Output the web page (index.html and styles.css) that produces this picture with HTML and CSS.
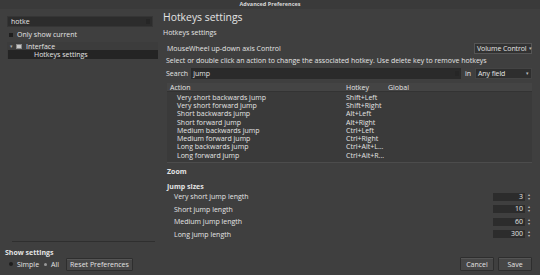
FILE: index.html
```html
<!DOCTYPE html>
<html lang="en">
<head>
    <meta charset="UTF-8">
    <title>Advanced Preferences</title>
    <link rel="stylesheet" href="styles.css">
</head>
<body>
    <div class="window">
        <div class="titlebar">Advanced Preferences</div>
        <div class="main">
            <div class="sidebar">
                <div class="search-box">hotke<span class="clear"></span></div>
                <label class="check-row"><span class="check"></span>Only show current</label>
                <div class="tree">
                    <div class="tree-item"><span class="arrow">▾</span><span class="folder"></span>Interface</div>
                    <div class="tree-item child selected">Hotkeys settings</div>
                </div>
                <div class="sidebar-fill"></div>
                <div class="sidebar-sep"></div>
                <div class="show-title">Show settings</div>
                <div class="show-row">
                    <span class="radio on"></span>Simple
                    <span class="radio"></span>All
                    <button class="btn reset">Reset Preferences</button>
                </div>
            </div>

            <div class="content">
                <h1 class="page-title">Hotkeys settings</h1>
                <div class="section-label">Hotkeys settings</div>

                <div class="option-row">
                    <span>MouseWheel up-down axis Control</span>
                    <span class="combo">Volume Control<span class="combo-arrow">▾</span></span>
                </div>
                <div class="hint">Select or double click an action to change the associated hotkey. Use delete key to remove hotkeys</div>

                <div class="search-row">
                    <span>Search</span>
                    <span class="search-input">jump<span class="clear"></span></span>
                    <span>in</span>
                    <span class="combo field">Any field<span class="combo-arrow">▾</span></span>
                </div>

                <div class="table">
                    <div class="thead">
                        <span class="col-action">Action</span>
                        <span class="col-hotkey">Hotkey</span>
                        <span class="col-global">Global</span>
                    </div>
                    <div class="trow"><span class="col-action">Very short backwards jump</span><span class="col-hotkey">Shift+Left</span></div>
                    <div class="trow"><span class="col-action">Very short forward jump</span><span class="col-hotkey">Shift+Right</span></div>
                    <div class="trow"><span class="col-action">Short backwards jump</span><span class="col-hotkey">Alt+Left</span></div>
                    <div class="trow"><span class="col-action">Short forward jump</span><span class="col-hotkey">Alt+Right</span></div>
                    <div class="trow"><span class="col-action">Medium backwards jump</span><span class="col-hotkey">Ctrl+Left</span></div>
                    <div class="trow"><span class="col-action">Medium forward jump</span><span class="col-hotkey">Ctrl+Right</span></div>
                    <div class="trow"><span class="col-action">Long backwards jump</span><span class="col-hotkey">Ctrl+Alt+L...</span></div>
                    <div class="trow"><span class="col-action">Long forward jump</span><span class="col-hotkey">Ctrl+Alt+R...</span></div>
                </div>

                <div class="group-title zoom">Zoom</div>
                <div class="group-title jump">Jump sizes</div>

                <div class="spin-row"><span>Very short jump length</span><span class="spin"><span class="spin-val">3</span><span class="spin-btns">▴<br>▾</span></span></div>
                <div class="spin-row"><span>Short jump length</span><span class="spin"><span class="spin-val">10</span><span class="spin-btns">▴<br>▾</span></span></div>
                <div class="spin-row"><span>Medium jump length</span><span class="spin"><span class="spin-val">60</span><span class="spin-btns">▴<br>▾</span></span></div>
                <div class="spin-row"><span>Long jump length</span><span class="spin"><span class="spin-val">300</span><span class="spin-btns">▴<br>▾</span></span></div>

                <div class="content-fill"></div>
                <div class="actions">
                    <button class="btn">Cancel</button>
                    <button class="btn">Save</button>
                </div>
            </div>
        </div>
    </div>
</body>
</html>
```

FILE: styles.css
```css
* {
    margin: 0;
    padding: 0;
    box-sizing: border-box;
}

body {
    font-family: "Open Sans", "Liberation Sans", sans-serif;
    background: #3f3f3f;
    color: #e4e4e4;
    font-size: 7px;
    line-height: 1;
    width: 540px;
    height: 275px;
    overflow: hidden;
}

.window {
    height: 275px;
    display: flex;
    flex-direction: column;
}

.titlebar {
    height: 9px;
    font-size: 5.5px;
    font-weight: 700;
    text-align: center;
    line-height: 9px;
    color: #d8d8d8;
    background: #3a3a3a;
}

.main {
    flex: 1;
    display: flex;
}

/* left side */
.sidebar {
    width: 158px;
    display: flex;
    flex-direction: column;
    padding: 7px 0 4px 7px;
}

.search-box {
    height: 11px;
    width: 146px;
    background: #2c2c2c;
    border: 1px solid #353535;
    padding-left: 3px;
    line-height: 9px;
    display: flex;
    justify-content: space-between;
    align-items: center;
}

.clear {
    width: 4px;
    height: 5px;
    background: #262626;
    margin-right: 2px;
}

.check-row {
    display: flex;
    align-items: center;
    height: 9px;
    margin-top: 3px;
    padding-left: 2px;
}

.check {
    width: 4px;
    height: 4px;
    background: #1e1e1e;
    margin-right: 4px;
}

.tree {
    margin-top: 3px;
    background: #3c3c3c;
}

.tree-item {
    height: 8px;
    display: flex;
    align-items: center;
    padding-left: 3px;
}

.arrow {
    font-size: 5px;
    color: #aaa;
    margin-right: 3px;
}

.folder {
    width: 6px;
    height: 5px;
    background: #c8c8c8;
    border: 1px solid #888;
    margin-right: 4px;
}

.tree-item.child {
    padding-left: 26px;
    height: 9px;
}

.selected {
    background: #242424;
    margin-left: 1px;
}

.sidebar-fill {
    flex: 1;
}

.sidebar-sep {
    height: 1px;
    background: #2f2f2f;
    margin: 0 0 7px 5px;
    width: 143px;
}

.show-title {
    font-weight: 700;
    margin-left: -2px;
    height: 8px;
}

.show-row {
    display: flex;
    align-items: center;
    height: 14px;
    margin-left: 2px;
}

.radio {
    width: 4px;
    height: 4px;
    border-radius: 50%;
    background: #1e1e1e;
    margin-right: 4px;
}

.radio:not(.on) {
    margin-left: 5px;
    background: #999;
    width: 3px;
    height: 3px;
}

.btn {
    font-family: inherit;
    font-size: 7px;
    color: #e4e4e4;
    background: #464646;
    border: 1px solid #2e2e2e;
    border-radius: 1px;
    height: 13px;
    padding: 0 3px;
    box-shadow: inset 0 1px 0 #555;
    white-space: nowrap;
}

.reset {
    margin-left: 7px;
}

/* right side */
.content {
    flex: 1;
    display: flex;
    flex-direction: column;
    padding: 1px 8px 4px 5px;
}

.page-title {
    font-size: 10.4px;
    font-weight: 400;
    height: 15px;
    line-height: 15px;
}

.section-label {
    margin-top: 2px;
    height: 12px;
    line-height: 12px;
}

.option-row {
    display: flex;
    justify-content: space-between;
    align-items: center;
    height: 13px;
    margin-top: 3px;
    padding-left: 4px;
}

.combo {
    display: flex;
    align-items: center;
    justify-content: space-between;
    height: 11px;
    width: 58px;
    white-space: nowrap;
    background: #323232;
    border: 1px solid #555;
    padding: 0 2px 0 2px;
    letter-spacing: -0.1px;
}

.combo-arrow {
    font-size: 5px;
    color: #bbb;
    margin-left: 2px;
}

.hint {
    height: 12px;
    line-height: 12px;
    padding-left: 3px;
}

.search-row {
    display: flex;
    align-items: center;
    height: 12px;
    padding-left: 3px;
}

.search-input {
    flex: 1;
    height: 11px;
    background: #2a2a2a;
    margin: 0 4px 0 3px;
    padding-left: 2px;
    display: flex;
    align-items: center;
    justify-content: space-between;
}

.search-row .combo {
    margin-left: 4px;
    width: 57px;
    background: #2e2e2e;
    border-color: #444;
}

.table {
    margin: 4px 0 0 4px;
    background: #3a3a3a;
    border-bottom: 1px solid #4c4c4c;
    padding-bottom: 3px;
}

.thead {
    display: flex;
    height: 9px;
    align-items: center;
    background: #444;
    border-bottom: 1px solid #333;
    padding-left: 3px;
    margin-bottom: 1px;
}

.trow {
    display: flex;
    height: 8.3px;
    align-items: center;
    padding-left: 10px;
}

.col-action {
    width: 169px;
}

.thead .col-action {
    width: 176px;
}

.col-hotkey {
    width: 42px;
}

.group-title {
    font-weight: 700;
    margin-top: 5px;
    padding-left: 4px;
    height: 8px;
}

.group-title.zoom {
    margin-bottom: 2px;
}

.group-title.jump {
    height: 7px;
}

.spin-row {
    display: flex;
    justify-content: space-between;
    align-items: center;
    height: 12.6px;
    padding-left: 11px;
}

.spin {
    display: flex;
    align-items: center;
}

.spin-val {
    width: 32px;
    height: 8px;
    background: #2c2c2c;
    text-align: right;
    padding-right: 2px;
    line-height: 8px;
}

.spin-btns {
    font-size: 4px;
    line-height: 4px;
    color: #bbb;
    margin-left: 1px;
    width: 6px;
    text-align: center;
}

.content-fill {
    flex: 1;
}

.actions {
    display: flex;
    justify-content: flex-end;
    gap: 4px;
}

.actions .btn {
    width: 34px;
    height: 14px;
    padding: 0;
}
```
